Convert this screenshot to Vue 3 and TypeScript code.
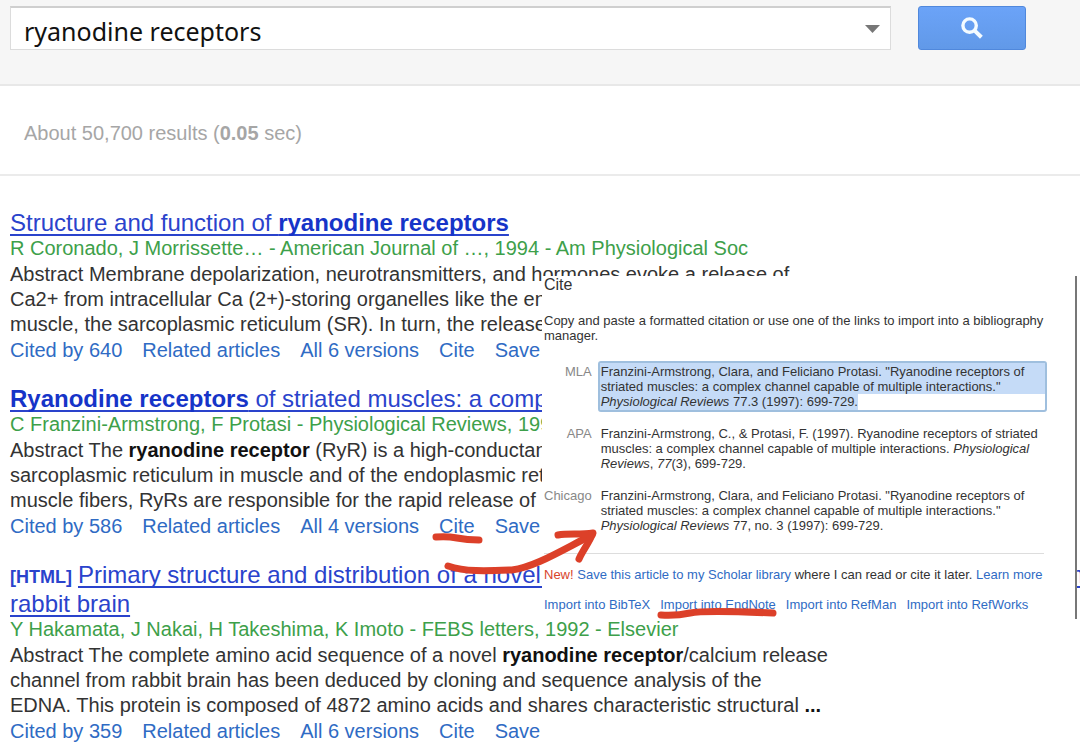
<script setup lang="ts">
import { ref } from 'vue'

interface Piece {
  text: string
  bold?: boolean
  italic?: boolean
}

interface Result {
  tag?: string
  title: Piece[][]
  source: string
  snippet: Piece[][]
  links: string[]
}

interface Citation {
  style: string
  selected?: boolean
  lines: Piece[][]
}

const query = ref('ryanodine receptors')

const results: Result[] = [
  {
    title: [[{ text: 'Structure and function of ' }, { text: 'ryanodine receptors', bold: true }]],
    source: 'R Coronado, J Morrissette… - American Journal of …, 1994 - Am Physiological Soc',
    snippet: [
      [{ text: 'Abstract Membrane depolarization, neurotransmitters, and hormones evoke a release of' }],
      [{ text: 'Ca2+ from intracellular Ca (2+)-storing organelles like the endoplasmic' }],
      [{ text: 'muscle, the sarcoplasmic reticulum (SR). In turn, the release' }],
    ],
    links: ['Cited by 640', 'Related articles', 'All 6 versions', 'Cite', 'Save'],
  },
  {
    title: [[{ text: 'Ryanodine receptors', bold: true }, { text: ' of striated muscles: a complex' }]],
    source: 'C Franzini-Armstrong, F Protasi - Physiological Reviews, 1997',
    snippet: [
      [{ text: 'Abstract The ' }, { text: 'ryanodine receptor', bold: true }, { text: ' (RyR) is a high-conductance' }],
      [{ text: 'sarcoplasmic reticulum in muscle and of the endoplasmic reticulum' }],
      [{ text: 'muscle fibers, RyRs are responsible for the rapid release of' }],
    ],
    links: ['Cited by 586', 'Related articles', 'All 4 versions', 'Cite', 'Save'],
  },
  {
    tag: '[HTML]',
    title: [
      [
        { text: 'Primary structure and distribution of a novel ' },
        { text: 'ryanodine receptor', bold: true },
        { text: '/calcium release channel from' },
      ],
      [{ text: 'rabbit brain' }],
    ],
    source: 'Y Hakamata, J Nakai, H Takeshima, K Imoto - FEBS letters, 1992 - Elsevier',
    snippet: [
      [
        { text: 'Abstract The complete amino acid sequence of a novel ' },
        { text: 'ryanodine receptor', bold: true },
        { text: '/calcium release' },
      ],
      [{ text: 'channel from rabbit brain has been deduced by cloning and sequence analysis of the' }],
      [
        { text: 'EDNA. This protein is composed of 4872 amino acids and shares characteristic structural ' },
        { text: '...', bold: true },
      ],
    ],
    links: ['Cited by 359', 'Related articles', 'All 6 versions', 'Cite', 'Save'],
  },
]

const citations: Citation[] = [
  {
    style: 'MLA',
    selected: true,
    lines: [
      [{ text: 'Franzini-Armstrong, Clara, and Feliciano Protasi. "Ryanodine receptors of' }],
      [{ text: 'striated muscles: a complex channel capable of multiple interactions."' }],
      [{ text: 'Physiological Reviews', italic: true }, { text: ' 77.3 (1997): 699-729.' }],
    ],
  },
  {
    style: 'APA',
    lines: [
      [{ text: 'Franzini-Armstrong, C., & Protasi, F. (1997). Ryanodine receptors of striated' }],
      [
        { text: 'muscles: a complex channel capable of multiple interactions. ' },
        { text: 'Physiological', italic: true },
      ],
      [{ text: 'Reviews', italic: true }, { text: ', ' }, { text: '77', italic: true }, { text: '(3), 699-729.' }],
    ],
  },
  {
    style: 'Chicago',
    lines: [
      [{ text: 'Franzini-Armstrong, Clara, and Feliciano Protasi. "Ryanodine receptors of' }],
      [{ text: 'striated muscles: a complex channel capable of multiple interactions."' }],
      [{ text: 'Physiological Reviews', italic: true }, { text: ' 77, no. 3 (1997): 699-729.' }],
    ],
  },
]

const imports = ['BibTeX', 'EndNote', 'RefMan', 'RefWorks']
</script>

<template>
  <div class="page">
    <form class="search" @submit.prevent>
      <div class="field">
        <input v-model="query" type="text" aria-label="Search" />
        <button type="button" class="more" aria-label="Advanced search">
          <svg width="15" height="8" viewBox="0 0 15 8"><path d="M0 0H15L7.5 8Z" fill="#777" /></svg>
        </button>
      </div>
      <button type="submit" class="go" aria-label="Search">
        <svg width="22" height="22" viewBox="0 0 22 22" fill="none" stroke="#f4fbff">
          <circle cx="8.6" cy="8.6" r="6.7" stroke-width="3.4" />
          <path d="M13.4 13.4L20.4 20.2" stroke-width="4" />
        </svg>
      </button>
    </form>

    <p class="stats">About 50,700 results (<b>0.05</b> sec)</p>

    <main class="results">
      <article v-for="result in results" :key="result.source" class="result">
        <h3>
          <span v-if="result.tag" class="tag">{{ result.tag }}</span>
          <a href="#"><template v-for="(line, i) in result.title" :key="i"><br v-if="i > 0" /><span v-for="(piece, j) in line" :key="j" :class="{ bold: piece.bold }">{{ piece.text }}</span></template></a>
        </h3>
        <p class="source">{{ result.source }}</p>
        <p class="snippet">
          <span v-for="(line, i) in result.snippet" :key="i" class="line"><span v-for="(piece, j) in line" :key="j" :class="{ strong: piece.bold }">{{ piece.text }}</span></span>
        </p>
        <nav class="actions">
          <a v-for="link in result.links" :key="link" href="#">{{ link }}</a>
        </nav>
      </article>
    </main>

    <section class="cite" role="dialog" aria-labelledby="cite-title">
      <h2 id="cite-title">Cite</h2>
      <p class="intro">Copy and paste a formatted citation or use one of the links to import into a bibliography manager.</p>
      <table>
        <tbody>
          <tr v-for="citation in citations" :key="citation.style">
            <th scope="row">{{ citation.style }}</th>
            <td>
              <div class="citation" :class="{ selected: citation.selected }">
                <span v-for="(line, i) in citation.lines" :key="i" class="line"><span v-for="(piece, j) in line" :key="j" :class="{ italic: piece.italic }">{{ piece.text }}</span></span>
              </div>
            </td>
          </tr>
        </tbody>
      </table>
      <p class="library">
        <span class="new">New!</span> <a href="#">Save this article to my Scholar library</a> where I can read or cite
        it later. <a href="#">Learn more</a>
      </p>
      <nav class="imports">
        <a v-for="name in imports" :key="name" href="#">Import into {{ name }}</a>
      </nav>
    </section>

    <svg class="marks" width="1080" height="743" viewBox="0 0 1080 743" aria-hidden="true">
      <path d="M436 537Q447 536 457 538T479 540" />
      <path d="M448 566C466 572 486 571 512 570C535 567 562 550 592 535" />
      <path d="M558 535C568 533 580 535 593 533C589 543 583 550 579 559" />
      <path d="M661 615Q676 616 690 613T773 613" />
    </svg>
  </div>
</template>

<style>
body {
  margin: 0;
  background: #fff;
}
</style>

<style scoped>
.page {
  position: relative;
  overflow: hidden;
  font-family: "Liberation Sans", Arial, sans-serif;
  font-size: 20px;
  color: #333;
}

a {
  color: #2f6bc4;
  text-decoration: none;
}

h2,
h3,
p {
  margin: 0;
  font-weight: 400;
}

button {
  padding: 0;
  border: 0;
  cursor: pointer;
}

.search {
  display: flex;
  gap: 27px;
  padding: 6px 54px 34px 10px;
  background: #f6f6f6;
  border-bottom: 2px solid #e8e8e8;
}

.field {
  display: flex;
  flex: 1;
  box-sizing: border-box;
  height: 44px;
  background: #fff;
  border: 1px solid #dcdcdc;
  border-top: 2px solid #cfcfcf;
}

.field input {
  flex: 1;
  min-width: 0;
  padding: 5px 0 0 13px;
  border: 0;
  outline: 0;
  background: transparent;
  color: #111;
  font: 25px "Noto Sans", "Open Sans", sans-serif;
}

.more {
  width: 36px;
  background: transparent;
}

.more svg,
.go svg {
  display: block;
  margin: 0 auto;
}

.go {
  width: 108px;
  height: 44px;
  border: 1px solid #5088dc;
  border-radius: 3px;
  background: linear-gradient(#6ba3f8, #6199e8);
}

.stats {
  padding: 35px 24px 28px;
  line-height: 25px;
  color: #a6a6a6;
  border-bottom: 2px solid #ebebeb;
}

.results {
  display: flex;
  flex-direction: column;
  gap: 21px;
  padding: 32px 0 0 10px;
  white-space: nowrap;
}

h3 {
  font-size: 24px;
  line-height: 29px;
}

h3 a {
  color: #2a43cc;
  text-decoration: underline;
  text-decoration-thickness: 2px;
  text-underline-offset: 3px;
  text-decoration-skip-ink: none;
}

.bold {
  font-weight: 700;
  color: #1634c8;
}

.tag {
  margin-right: 6px;
  font-size: 18px;
  font-weight: 700;
  line-height: 18px;
  color: #2a43cc;
}

.source {
  line-height: 23px;
  color: #3da04a;
}

.snippet {
  margin: 2px 0 1px;
  line-height: 25px;
}

.line {
  display: block;
}

.strong {
  font-weight: 700;
  color: #111;
}

.actions {
  display: flex;
  gap: 20px;
  line-height: 25px;
}

.cite {
  position: absolute;
  top: 276px;
  left: 542px;
  right: 3px;
  padding: 0 31px 7px 2px;
  border-right: 2px solid #777;
  background: #fff;
  font-size: 13px;
  line-height: 15px;
}

.cite h2 {
  font-size: 16px;
  line-height: 18px;
}

.intro {
  margin-top: 19px;
}

table {
  width: 100%;
  margin: 18px 0 6px;
  border-collapse: collapse;
}

th {
  width: 46px;
  padding: 3px 6px 0 0;
  font-weight: 400;
  text-align: right;
  vertical-align: top;
  color: #888;
}

td {
  padding: 0;
}

.citation {
  margin: 0 -3px 11px 0;
  padding: 1px;
  border: 2px solid transparent;
  border-radius: 3px;
  white-space: nowrap;
}

.selected {
  padding: 0;
  border-color: #9fbfde;
}

.selected .line {
  padding: 0 1px;
  background: #c5dbf7;
}

.selected .line:first-child {
  padding-top: 1px;
}

.selected .line:last-child {
  width: max-content;
  padding: 0 0 1px 1px;
}

.italic {
  font-style: italic;
}

.library {
  padding-top: 13px;
  border-top: 1px solid #ddd;
  white-space: nowrap;
}

.new {
  color: #d8442c;
}

.imports {
  display: flex;
  gap: 10px;
  margin-top: 15px;
  white-space: nowrap;
}

.marks {
  position: absolute;
  top: 0;
  left: 0;
  fill: none;
  stroke: #dc4029;
  stroke-width: 7;
  stroke-linecap: round;
  stroke-linejoin: round;
  pointer-events: none;
}
</style>
